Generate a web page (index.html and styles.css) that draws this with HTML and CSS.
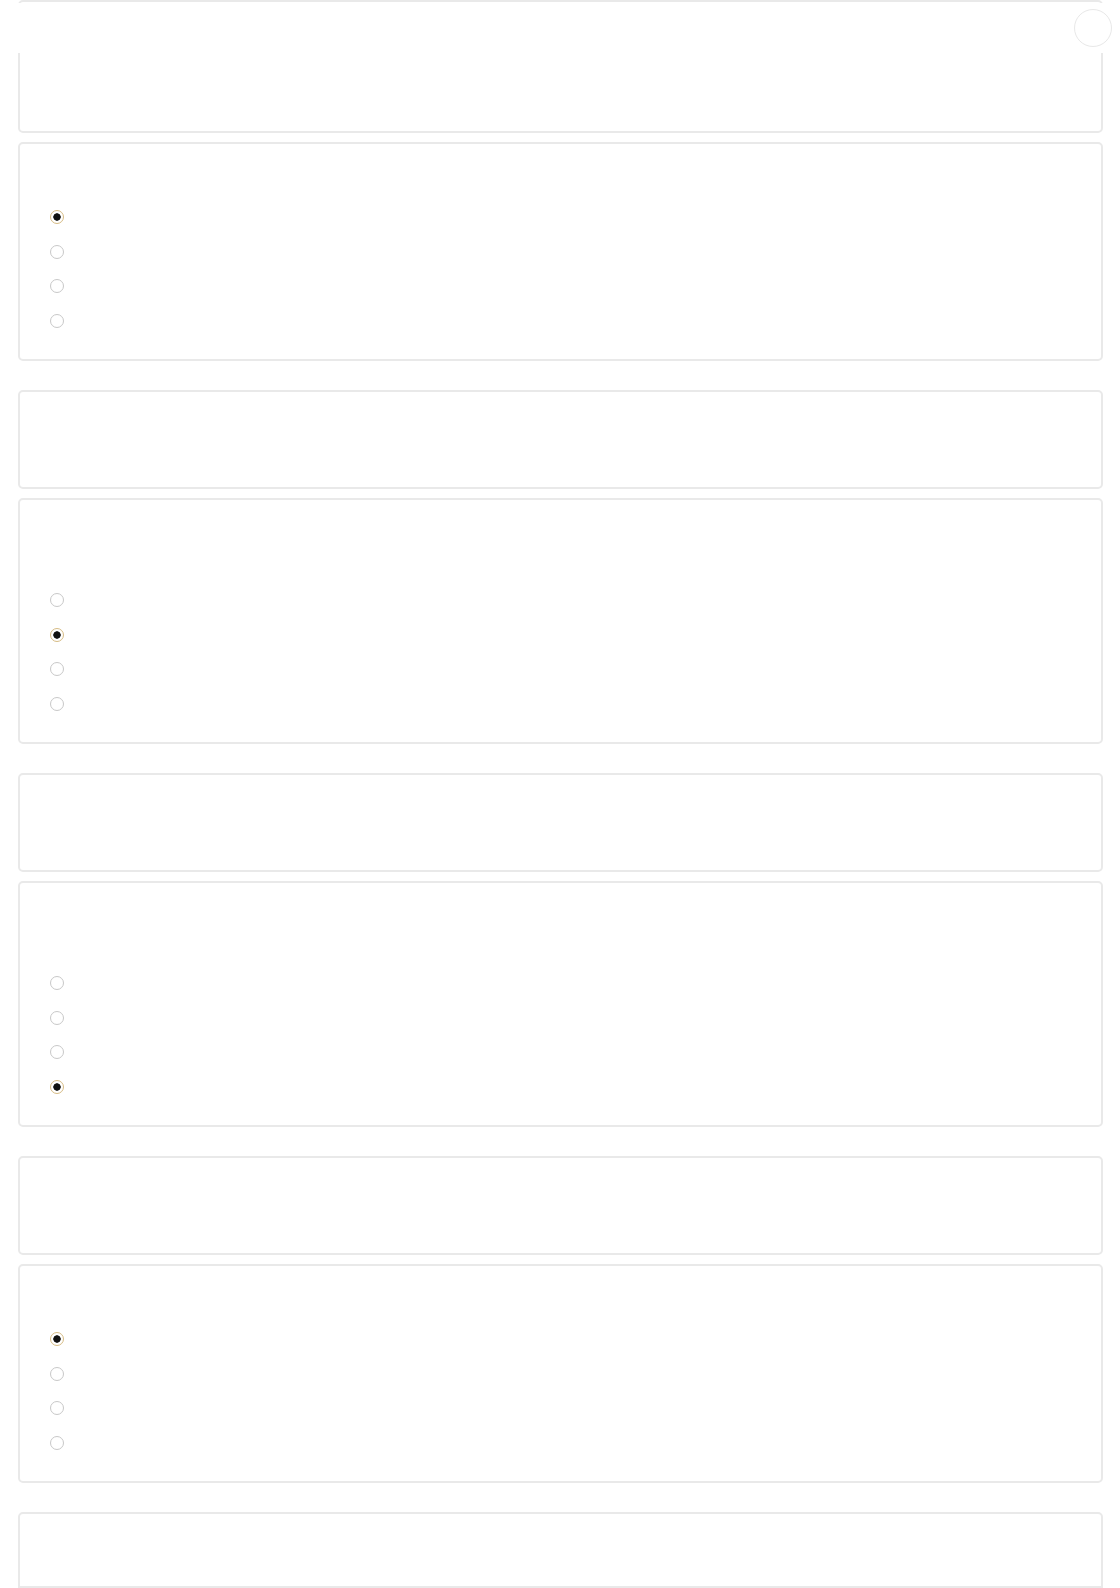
FILE: index.html
```html
<!DOCTYPE html>
<html lang="en">
<head>
    <meta charset="UTF-8">
    <meta name="viewport" content="width=device-width, initial-scale=1.0">
    <title>Quiz</title>
    <link rel="stylesheet" href="styles.css">
</head>
<body>
    <header class="top-bar">
        <div class="avatar"></div>
    </header>

    <main class="quiz">
        <div class="card intro-card"></div>

        <div class="card options-card">
            <div class="question-title"></div>
            <label class="option"><input type="radio" name="q1" checked></label>
            <label class="option"><input type="radio" name="q1"></label>
            <label class="option"><input type="radio" name="q1"></label>
            <label class="option"><input type="radio" name="q1"></label>
        </div>

        <div class="card prompt-card group-start"></div>

        <div class="card options-card">
            <div class="question-title tall"></div>
            <label class="option"><input type="radio" name="q2"></label>
            <label class="option"><input type="radio" name="q2" checked></label>
            <label class="option"><input type="radio" name="q2"></label>
            <label class="option"><input type="radio" name="q2"></label>
        </div>

        <div class="card prompt-card group-start"></div>

        <div class="card options-card">
            <div class="question-title tall"></div>
            <label class="option"><input type="radio" name="q3"></label>
            <label class="option"><input type="radio" name="q3"></label>
            <label class="option"><input type="radio" name="q3"></label>
            <label class="option"><input type="radio" name="q3" checked></label>
        </div>

        <div class="card prompt-card group-start"></div>

        <div class="card options-card">
            <div class="question-title"></div>
            <label class="option"><input type="radio" name="q4" checked></label>
            <label class="option"><input type="radio" name="q4"></label>
            <label class="option"><input type="radio" name="q4"></label>
            <label class="option"><input type="radio" name="q4"></label>
        </div>

        <div class="card media-card group-start">
            <div class="media-block"></div>
        </div>
    </main>
</body>
</html>
```

FILE: styles.css
```css
body {
    font-family: "Liberation Sans", Arial, sans-serif;
    margin: 0;
    padding: 0 17px 40px 18px;
    background: #fff;
    color: #fff;
}

.top-bar {
    position: fixed;
    top: 3px;
    left: 0;
    right: 0;
    height: 50px;
    background: #fff;
    display: flex;
    align-items: center;
    justify-content: flex-end;
    padding-right: 8px;
    z-index: 10;
}

.avatar {
    width: 36px;
    height: 36px;
    border: 1px solid #e8e8e8;
    border-radius: 50%;
    background: #fff;
}

.quiz {
    display: flex;
    flex-direction: column;
    gap: 9px;
}

.card {
    border: 2px solid #e9e9e9;
    border-radius: 5px;
    background: #fff;
}

.group-start {
    margin-top: 20px;
}

.intro-card {
    height: 129px;
}

.prompt-card {
    height: 95px;
}

.options-card {
    padding: 24px 30px 21px;
}

.question-title {
    height: 32px;
}

.question-title.tall {
    height: 59px;
}

.option {
    display: flex;
    align-items: center;
    height: 34.5px;
}

.option input {
    appearance: none;
    -webkit-appearance: none;
    margin: 0;
    width: 14px;
    height: 14px;
    border: 1px solid #c8c8c8;
    border-radius: 50%;
    background: #fff;
}

.option input:checked {
    border-color: #d6bb84;
    background: radial-gradient(circle, #111 0, #111 3.4px, #fff 4px);
}

.media-card {
    height: 300px;
    padding-top: 72px;
    box-sizing: border-box;
}

.media-block {
    border-top: 2px solid #e9e9e9;
    height: 100px;
}
```
